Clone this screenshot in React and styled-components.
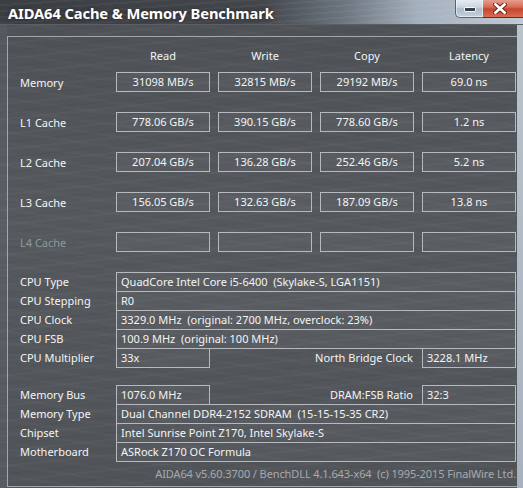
import styled, { createGlobalStyle } from "styled-components";

const GlobalStyle = createGlobalStyle`
  html, body {
    margin: 0;
    padding: 0;
    background: #4f5358;
  }
  * {
    box-sizing: border-box;
  }
`

const Window = styled.div`
  width: 523px;
  height: 488px;
  overflow: hidden;
  display: flex;
  flex-direction: column;
  font-family: "Noto Sans", "DejaVu Sans", sans-serif;
  font-size: 11px;
  color: #f4f4f4;
  background:
    repeating-linear-gradient(-6deg, rgba(255,255,255,0.025) 0 2px, transparent 2px 7px, rgba(0,0,0,0.03) 7px 9px, transparent 9px 15px),
    repeating-linear-gradient(8deg, rgba(255,255,255,0.02) 0 3px, transparent 3px 11px),
    linear-gradient(180deg, #4d5156 0%, #55595e 45%, #505459 100%);
`

const TitleBar = styled.div`
  height: 25px;
  flex: none;
  display: flex;
  align-items: flex-start;
  background:
    repeating-linear-gradient(-4deg, rgba(255,255,255,0.04) 0 2px, transparent 2px 6px),
    linear-gradient(90deg, #3b3e43 0%, #43464b 50%, #6d7680 66%, #a4b0bd 80%, #c0cad5 100%);
  border-bottom: 1px solid #5b6066;
`

const Title = styled.div`
  padding: 3px 0 0 8px;
  font-size: 14.7px;
  font-weight: bold;
  color: #ffffff;
  letter-spacing: -0.1px;
  text-shadow: 0 0 4px rgba(0,0,0,0.5);
`

const WindowButtons = styled.div`
  margin-left: auto;
  display: flex;
  height: 19px;
  margin-top: -1px;
`

const MinButton = styled.div`
  width: 28px;
  height: 19px;
  display: flex;
  align-items: center;
  justify-content: center;
  padding-top: 3px;
  border: 1px solid #5a6470;
  border-top: none;
  border-right: none;
  border-radius: 0 0 0 5px;
  background: linear-gradient(180deg, #e8eef4 0%, #ccd6e0 45%, #aebbc8 55%, #c6d2de 100%);
  box-shadow: inset 0 0 0 1px rgba(255,255,255,0.5);
`

const Dash = styled.div`
  width: 12px;
  height: 5px;
  background: #3a4048;
  border: 1px solid #f4f6f8;
  border-radius: 1px;
`

const CloseButton = styled.div`
  width: 40px;
  height: 19px;
  display: flex;
  align-items: center;
  justify-content: center;
  padding: 1px 6px 0 0;
  border-bottom: 1px solid #6a2a22;
  background: linear-gradient(180deg, #e9a696 0%, #d86a55 45%, #c64530 55%, #da6c55 100%);
`

const Body = styled.div`
  flex: 1;
  display: flex;
  padding-left: 7px;
  background: linear-gradient(90deg, rgba(110,120,135,0.15) 0, rgba(110,120,135,0.15) 7px, transparent 7px);
`

const Panel = styled.div`
  flex: 1;
  min-width: 0;
  margin: 11px 0 1px 0;
  border-top: 1px solid #a2a7ac;
  border-left: 1px solid #a2a7ac;
  border-bottom: 1px solid #a2a7ac;
  padding: 12px 0 0 12px;
  display: flex;
  flex-direction: column;
`

const Strip = styled.div`
  width: 6px;
  flex: none;
  background: linear-gradient(180deg, #b8c3ce 0%, #a7b2be 100%);
`

const Grid = styled.div`
  display: grid;
  grid-template-columns: 88px repeat(4, 94px);
  column-gap: 8px;
`

const HeaderRow = styled(Grid)`
  height: 14px;
  line-height: 14px;
  margin-bottom: 9px;
`

const HeaderCell = styled.div`
  text-align: center;
`

const BenchGrid = styled(Grid)`
  grid-auto-rows: 20px;
  row-gap: 20px;
`

const Label = styled.div`
  display: flex;
  align-items: center;
  white-space: pre;
  color: ${p => (p.$dim ? "#8d9c9b" : "#f4f4f4")};
  justify-content: ${p => (p.$right ? "flex-end" : "flex-start")};
  padding-right: ${p => (p.$right ? "1px" : "0")};
  grid-column: ${p => p.$span || "auto"};
`

const BenchBox = styled.div`
  height: 20px;
  border: 1px solid #b6babe;
  background: rgba(255,255,255,0.03);
  display: flex;
  align-items: center;
  justify-content: center;
  padding-bottom: 1px;
`

const InfoGrid = styled(Grid)`
  grid-auto-rows: 19px;
  margin-top: ${p => p.$top}px;
`

const InfoBox = styled.div`
  height: 20px;
  border: 1px solid #b6babe;
  background: rgba(255,255,255,0.03);
  display: flex;
  align-items: center;
  padding: 0 0 1px 4px;
  white-space: pre;
  grid-column: ${p => p.$span || "auto"};
`

const Footer = styled.div`
  margin-top: 6px;
  height: 14px;
  line-height: 14px;
  text-align: right;
  padding-right: 1px;
  color: #a6aaae;
  white-space: pre;
  letter-spacing: -0.1px;
`

const bench = [
  { name: "Memory", values: ["31098 MB/s", "32815 MB/s", "29192 MB/s", "69.0 ns"] },
  { name: "L1 Cache", values: ["778.06 GB/s", "390.15 GB/s", "778.60 GB/s", "1.2 ns"] },
  { name: "L2 Cache", values: ["207.04 GB/s", "136.28 GB/s", "252.46 GB/s", "5.2 ns"] },
  { name: "L3 Cache", values: ["156.05 GB/s", "132.63 GB/s", "187.09 GB/s", "13.8 ns"] },
  { name: "L4 Cache", values: ["", "", "", ""], dim: true },
]

const CloseIcon = () => (
  <svg width="14" height="11" viewBox="0 0 14 11">
    <path d="M2.5 1.5 L11.5 9.5 M11.5 1.5 L2.5 9.5" stroke="#5a1e16" strokeWidth="4.6" strokeLinecap="square" />
    <path d="M2.5 1.5 L11.5 9.5 M11.5 1.5 L2.5 9.5" stroke="#ffffff" strokeWidth="2.8" strokeLinecap="square" />
  </svg>
)

export default function App() {
  return (
    <>
      <GlobalStyle />
      <Window>
        <TitleBar>
          <Title>AIDA64 Cache &amp; Memory Benchmark</Title>
          <WindowButtons>
            <MinButton><Dash /></MinButton>
            <CloseButton><CloseIcon /></CloseButton>
          </WindowButtons>
        </TitleBar>
        <Body>
          <Panel>
            <HeaderRow>
              <div />
              <HeaderCell>Read</HeaderCell>
              <HeaderCell>Write</HeaderCell>
              <HeaderCell>Copy</HeaderCell>
              <HeaderCell>Latency</HeaderCell>
            </HeaderRow>

            <BenchGrid>
              {bench.map(row => [
                <Label key={row.name} $dim={row.dim}>{row.name}</Label>,
                ...row.values.map((v, i) => (
                  <BenchBox key={row.name + i}>{v}</BenchBox>
                )),
              ])}
            </BenchGrid>

            <InfoGrid $top={20}>
              <Label>CPU Type</Label>
              <InfoBox $span="2 / 6">QuadCore Intel Core i5-6400  (Skylake-S, LGA1151)</InfoBox>
              <Label>CPU Stepping</Label>
              <InfoBox $span="2 / 6">R0</InfoBox>
              <Label>CPU Clock</Label>
              <InfoBox $span="2 / 6">3329.0 MHz  (original: 2700 MHz, overclock: 23%)</InfoBox>
              <Label>CPU FSB</Label>
              <InfoBox $span="2 / 6">100.9 MHz  (original: 100 MHz)</InfoBox>
              <Label>CPU Multiplier</Label>
              <InfoBox>33x</InfoBox>
              <Label $right $span="3 / 5">North Bridge Clock</Label>
              <InfoBox>3228.1 MHz</InfoBox>
            </InfoGrid>

            <InfoGrid $top={18}>
              <Label>Memory Bus</Label>
              <InfoBox>1076.0 MHz</InfoBox>
              <Label $right $span="3 / 5">DRAM:FSB Ratio</Label>
              <InfoBox>32:3</InfoBox>
              <Label>Memory Type</Label>
              <InfoBox $span="2 / 6">Dual Channel DDR4-2152 SDRAM  (15-15-15-35 CR2)</InfoBox>
              <Label>Chipset</Label>
              <InfoBox $span="2 / 6">Intel Sunrise Point Z170, Intel Skylake-S</InfoBox>
              <Label>Motherboard</Label>
              <InfoBox $span="2 / 6">ASRock Z170 OC Formula</InfoBox>
            </InfoGrid>

            <Footer>AIDA64 v5.60.3700 / BenchDLL 4.1.643-x64  (c) 1995-2015 FinalWire Ltd.</Footer>
          </Panel>
          <Strip />
        </Body>
      </Window>
    </>
  )
}
